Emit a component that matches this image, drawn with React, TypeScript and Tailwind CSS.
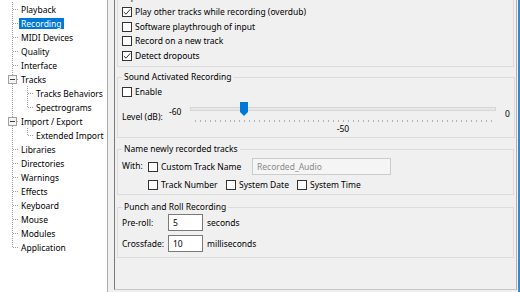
import React from "react";

type RowProps = {
  label: string;
  level?: 0 | 1;
  last?: boolean;
  expander?: boolean;
  selected?: boolean;
};

function TreeRow({ label, level = 0, last = false, expander = false, selected = false }: RowProps) {
  const w = level === 0 ? 19 : 34;
  const dot = { stroke: "#a0a0a0", strokeDasharray: "1 1", strokeWidth: 1 };
  return (
    <div className="flex h-[14px] items-center whitespace-nowrap">
      <svg width={w} height={14} className="shrink-0">
        <line x1="12.5" y1="0" x2="12.5" y2={level === 0 && last ? 8 : 14} {...dot} />
        {level === 0 && <line x1="13" y1="7.5" x2="19" y2="7.5" {...dot} />}
        {level === 1 && (
          <>
            <line x1="27.5" y1="0" x2="27.5" y2={last ? 8 : 14} {...dot} />
            <line x1="28" y1="7.5" x2="34" y2="7.5" {...dot} />
          </>
        )}
        {expander && (
          <g>
            <rect x="8.5" y="3.5" width="8" height="8" fill="#f4f4f4" stroke="#a0a0a0" />
            <line x1="10" y1="7.5" x2="15" y2="7.5" stroke="#3c3c3c" />
          </g>
        )}
      </svg>
      <span
        className={
          selected
            ? "bg-[#0078d7] px-[2px] leading-[11px] text-white"
            : "px-[2px] leading-[11px]"
        }
      >
        {label}
      </span>
    </div>
  );
}

function Box({ checked = false }: { checked?: boolean }) {
  return (
    <span className="flex h-[10px] w-[10px] shrink-0 items-center justify-center border border-[#333333] bg-white">
      {checked && (
        <svg width="8" height="8" viewBox="0 0 8 8">
          <path d="M0.8 4 L3 6.2 L7.2 1.4" fill="none" stroke="#333333" strokeWidth="1" />
        </svg>
      )}
    </span>
  );
}

function Check({ label, checked = false }: { label: string; checked?: boolean }) {
  return (
    <div className="flex h-[14.5px] items-center gap-[3px] whitespace-nowrap">
      <Box checked={checked} />
      <span>{label}</span>
    </div>
  );
}

function Slider() {
  const ticks: number[] = [];
  for (let i = 0; i <= 60; i++) ticks.push(Math.round(9 + (296 * i) / 60) + 0.5);
  return (
    <svg width={314} height={22} className="shrink-0">
      <rect x="4.5" y="6.5" width="305" height="3" fill="#e7e7e7" stroke="#d6d6d6" />
      {ticks.map((x, i) => (
        <line key={i} x1={x} y1="19" x2={x} y2="21" stroke="#b4b4b4" />
      ))}
      <polygon points="54,1 62,1 62,11 58,15 54,11" fill="#0078d7" />
    </svg>
  );
}

export default function App() {
  return (
    <div className="flex h-[292px] w-[520px] overflow-hidden bg-[#f0f0f0] font-['Noto_Sans',sans-serif] text-[8.5px] leading-[12px] text-black">
      {/* Tree */}
      <div className="h-[292px] w-[108px] shrink-0 border-r border-[#adadad] bg-white pt-[2px]">
        <TreeRow label="Playback" />
        <TreeRow label="Recording" selected />
        <TreeRow label="MIDI Devices" />
        <TreeRow label="Quality" />
        <TreeRow label="Interface" />
        <TreeRow label="Tracks" expander />
        <TreeRow label="Tracks Behaviors" level={1} />
        <TreeRow label="Spectrograms" level={1} last />
        <TreeRow label="Import / Export" expander />
        <TreeRow label="Extended Import" level={1} last />
        <TreeRow label="Libraries" />
        <TreeRow label="Directories" />
        <TreeRow label="Warnings" />
        <TreeRow label="Effects" />
        <TreeRow label="Keyboard" />
        <TreeRow label="Mouse" />
        <TreeRow label="Modules" />
        <TreeRow label="Application" last />
      </div>

      {/* Panel */}
      <div className="ml-[6px] flex h-[290px] w-[403px] shrink-0 flex-col border-b border-l border-r border-b-[#c8c8c8] border-l-[#7a7a7a] border-r-[#b4b4b4]">
        <div className="mx-[2px] mt-[-9px] flex flex-col">
          {/* Options */}
          <fieldset className="border border-[#dcdcdc] px-[4px] pb-[3px] pt-[2px]">
            <legend className="px-[2px] leading-[12px]">Options</legend>
            <Check label="Play other tracks while recording (overdub)" checked />
            <Check label="Software playthrough of input" />
            <Check label="Record on a new track" />
            <Check label="Detect dropouts" checked />
          </fieldset>

          {/* Sound Activated Recording */}
          <fieldset className="mt-[4px] border border-[#dcdcdc] px-[4px] pb-[2px] pt-[2px]">
            <legend className="px-[2px] leading-[12px]">Sound Activated Recording</legend>
            <div className="flex h-[14px] items-center gap-[3px]">
              <Box />
              <span>Enable</span>
            </div>
            <div className="mt-[2px] flex items-start whitespace-nowrap">
              <span className="mt-[10px] w-[46px] shrink-0">Level (dB):</span>
              <span className="mt-[5px] w-[18px] shrink-0 pl-[1px]">-60</span>
              <div className="flex w-[314px] shrink-0 flex-col">
                <Slider />
                <div className="text-center leading-[12px]">-50</div>
              </div>
              <span className="ml-[5px] mt-[7px]">0</span>
            </div>
          </fieldset>

          {/* Name newly recorded tracks */}
          <fieldset className="mt-[5px] border border-[#dcdcdc] px-[4px] pb-[2px] pt-[2px]">
            <legend className="px-[2px] leading-[12px]">Name newly recorded tracks</legend>
            <div className="grid grid-cols-[26px_1fr] whitespace-nowrap">
              <span className="mt-[3px] leading-[12px]">With:</span>
              <div className="flex h-[19px] items-center">
                <Box />
                <span className="ml-[3px] w-[91px]">Custom Track Name</span>
                <div className="flex h-[17px] w-[139px] items-center border border-[#cccccc] bg-[#f5f5f5] pl-[4px] text-[#8a8a8a]">
                  Recorded_Audio
                </div>
              </div>
              <span />
              <div className="mt-[2px] flex h-[14px] items-center">
                <Box />
                <span className="ml-[3px] w-[65px]">Track Number</span>
                <Box />
                <span className="ml-[3px] w-[58px]">System Date</span>
                <Box />
                <span className="ml-[3px]">System Time</span>
              </div>
            </div>
          </fieldset>

          {/* Punch and Roll Recording */}
          <fieldset className="mt-[6px] border border-[#dcdcdc] px-[4px] pb-[4px] pt-[0px]">
            <legend className="px-[2px] leading-[12px]">Punch and Roll Recording</legend>
            <div className="flex h-[19px] items-center whitespace-nowrap">
              <span className="w-[46px]">Pre-roll:</span>
              <div className="flex h-[17px] w-[35px] items-center border border-[#7a7a7a] bg-white pl-[4px]">5</div>
              <span className="ml-[4px]">seconds</span>
            </div>
            <div className="mt-[2px] flex h-[19px] items-center whitespace-nowrap">
              <span className="w-[46px]">Crossfade:</span>
              <div className="flex h-[17px] w-[35px] items-center border border-[#7a7a7a] bg-white pl-[4px]">10</div>
              <span className="ml-[4px]">milliseconds</span>
            </div>
          </fieldset>
        </div>
      </div>

      <div className="w-[1px] shrink-0" />
      <div className="w-[2px] shrink-0 bg-[#3f86c6]" />
    </div>
  );
}
